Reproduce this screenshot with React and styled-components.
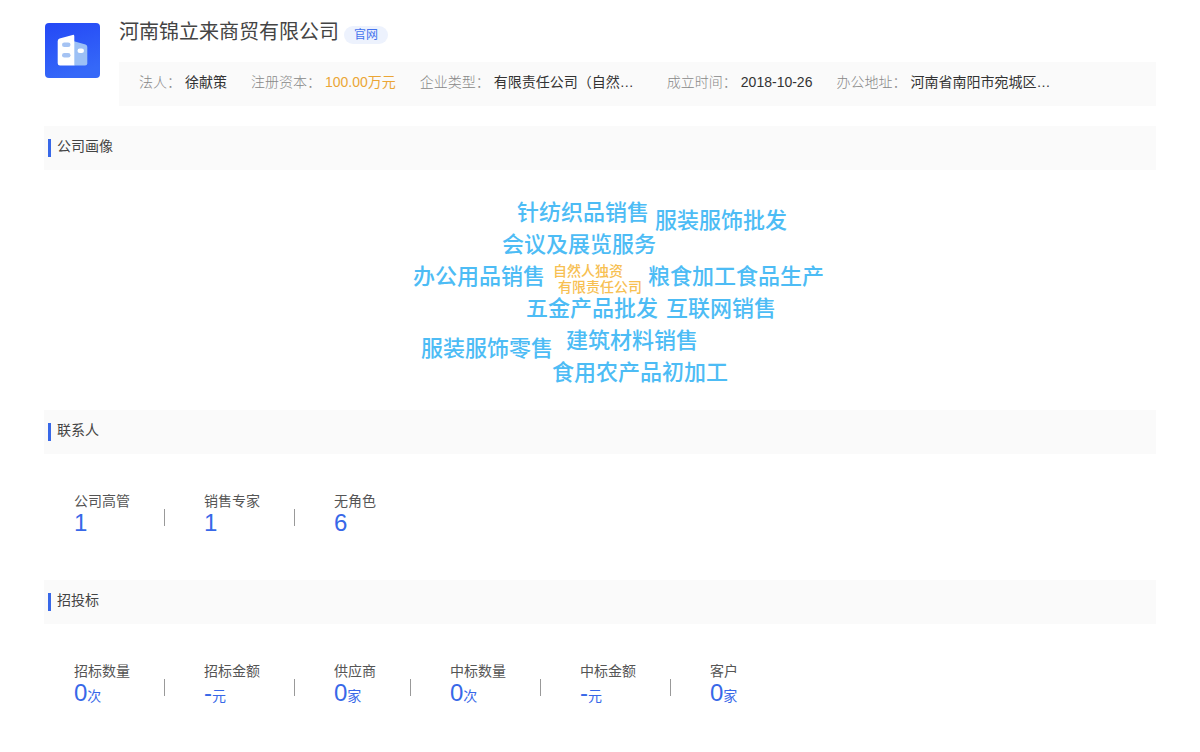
import styled, { createGlobalStyle } from "styled-components";

const infos = [
  { id: 1, label: "法人：", value: "徐献策" },
  { id: 2, label: "注册资本：", value: "100.00万元", highlight: true },
  { id: 3, label: "企业类型：", value: "有限责任公司（自然…", wide: true },
  { id: 4, label: "成立时间：", value: "2018-10-26" },
  { id: 5, label: "办公地址：", value: "河南省南阳市宛城区…", wide: true },
];

// x is measured from the middle of the cloud, y from its top
const words = [
  { text: "针纺织品销售", x: -83, y: 27 },
  { text: "服装服饰批发", x: 55, y: 35 },
  { text: "会议及展览服务", x: -98, y: 59 },
  { text: "办公用品销售", x: -187, y: 91 },
  { text: "自然人独资", x: -47, y: 90, small: true },
  { text: "有限责任公司", x: -42, y: 106, small: true },
  { text: "粮食加工食品生产", x: 48, y: 91 },
  { text: "五金产品批发", x: -74, y: 123 },
  { text: "互联网销售", x: 66, y: 123 },
  { text: "建筑材料销售", x: -34, y: 155 },
  { text: "服装服饰零售", x: -179, y: 163 },
  { text: "食用农产品初加工", x: -48, y: 187 },
];

const contacts = [
  { label: "公司高管", value: "1" },
  { label: "销售专家", value: "1" },
  { label: "无角色", value: "6" },
];

const bids = [
  { label: "招标数量", value: "0", unit: "次" },
  { label: "招标金额", value: "-", unit: "元" },
  { label: "供应商", value: "0", unit: "家" },
  { label: "中标数量", value: "0", unit: "次" },
  { label: "中标金额", value: "-", unit: "元" },
  { label: "客户", value: "0", unit: "家" },
];

const CompanyLogo = () => (
  <Logo viewBox="-1 -1 56 56" role="img" aria-label="公司">
    <defs>
      <linearGradient id="logoBg" x1="0" y1="0" x2="0.3" y2="1">
        <stop offset="0" stopColor="#2448f6" />
        <stop offset="1" stopColor="#3568f8" />
      </linearGradient>
    </defs>
    <rect width="55" height="55" rx="4" fill="url(#logoBg)" />
    <path
      d="M29 18.2l11.500 3.300q1.800.6 1.800 2.400v16.400q0 2.200-2.200 2.200H29z"
      fill="#9cc0f5"
    />
    <path
      d="M14.600 15.400L27.600 11.900q1.700-.4 1.700 1.300v29.300H15q-2.300 0-2.300-2.300V18q0-2.100 1.900-2.600z"
      fill="#fff"
    />
    <rect x="17" y="19.500" width="8.500" height="4.600" rx="2.300" fill="#a5c3f3" />
    <rect x="17" y="30" width="8.500" height="4.600" rx="2.300" fill="#a5c3f3" />
    <rect x="32.500" y="25.500" width="6.500" height="4.600" rx="2.300" fill="#fff" />
  </Logo>
);

const StatList = ({ items }) => (
  <Stats>
    {items.map((item) => (
      <Stat key={item.label}>
        <StatLabel>{item.label}</StatLabel>
        <StatValue>
          {item.value}
          {item.unit && <StatUnit>{item.unit}</StatUnit>}
        </StatValue>
      </Stat>
    ))}
  </Stats>
);

const App = () => {
  return (
    <>
      <GlobalStyle />
      <Container lang="zh-CN">
        <Header>
          <CompanyLogo />
          <HeaderMain>
            <TitleRow>
              <Title>河南锦立来商贸有限公司</Title>
              <SiteLink href="#">官网</SiteLink>
            </TitleRow>
            <InfoBar>
              {infos.map((item) => (
                <InfoItem key={item.id}>
                  <InfoLabel>{item.label}</InfoLabel>
                  <InfoValue $highlight={item.highlight} $wide={item.wide}>
                    {item.value}
                  </InfoValue>
                </InfoItem>
              ))}
            </InfoBar>
          </HeaderMain>
        </Header>
        <section>
          <SectionTitle>公司画像</SectionTitle>
          <Cloud>
            {words.map((word) => (
              <Word key={word.text} $x={word.x} $y={word.y} $small={word.small}>
                {word.text}
              </Word>
            ))}
          </Cloud>
        </section>
        <section>
          <SectionTitle>联系人</SectionTitle>
          <StatList items={contacts} />
        </section>
        <section>
          <SectionTitle>招投标</SectionTitle>
          <StatList items={bids} />
        </section>
      </Container>
    </>
  );
};

export default App;

const GlobalStyle = createGlobalStyle`
  * {
    box-sizing: border-box;
  }
  body {
    margin: 0;
    background: #fff;
    color: #444;
    font-family: "Liberation Sans", "Noto Sans CJK SC", sans-serif;
    font-size: 14px;
    line-height: 20px;
  }
`;
const Container = styled.main`
  padding: 20px 44px 0;
`;
const Header = styled.header`
  display: flex;
  gap: 19px;
  margin-bottom: 20px;
`;
const Logo = styled.svg`
  flex: none;
  width: 56px;
  height: 56px;
  margin-top: 2px;
`;
const HeaderMain = styled.div`
  flex: 1;
  min-width: 0;
`;
const TitleRow = styled.div`
  display: flex;
  align-items: flex-end;
  gap: 5px;
  height: 24px;
  margin-bottom: 18px;
`;
const Title = styled.h1`
  margin: 0;
  font-weight: 400;
  font-size: 20px;
  line-height: 24px;
`;
const SiteLink = styled.a`
  padding: 0 10px;
  border-radius: 9px;
  background: #edf2fd;
  color: #4472ee;
  font-size: 12px;
  line-height: 18px;
  text-decoration: none;
`;
const InfoBar = styled.dl`
  display: flex;
  flex-wrap: wrap;
  gap: 4px 24px;
  margin: 0;
  padding: 10px 20px 14px;
  background: #fafafa;
`;
const InfoItem = styled.div`
  display: flex;
  gap: 4px;
`;
const InfoLabel = styled.dt`
  color: #888;
  font-weight: 300;
`;
const InfoValue = styled.dd`
  width: ${(props) => (props.$wide ? "149px" : "auto")};
  margin: 0;
  color: ${(props) => (props.$highlight ? "#eba636" : "#333")};
  white-space: nowrap;
`;
const SectionTitle = styled.h2`
  display: flex;
  align-items: flex-start;
  gap: 6px;
  margin: 0;
  padding: 10px 4px 13px;
  background: #fafafa;
  font-weight: 400;
  font-size: 14px;
  line-height: 20px;
  &::before {
    content: "";
    width: 3px;
    height: 18px;
    margin-top: 3px;
    background: #3868e8;
  }
`;
const Cloud = styled.div`
  position: relative;
  height: 240px;
`;
const Word = styled.span`
  position: absolute;
  top: ${(props) => props.$y}px;
  left: calc(50% + ${(props) => props.$x}px);
  color: ${(props) => (props.$small ? "#f7c052" : "#4dbcf5")};
  font-weight: 500;
  font-size: ${(props) => (props.$small ? "14px" : "22px")};
  line-height: ${(props) => (props.$small ? "22px" : "32px")};
  white-space: nowrap;
`;
const Stats = styled.dl`
  display: flex;
  flex-wrap: wrap;
  margin: 0;
  padding: 37px 30px 45px;
`;
const Stat = styled.div`
  display: grid;
  grid-template-columns: auto 1px;
  column-gap: 34px;
  margin-right: 39px;
  &:not(:last-child)::after {
    content: "";
    grid-area: 1 / 2 / span 2;
    align-self: center;
    height: 17px;
    margin-top: 8px;
    background: #999;
  }
`;
const StatLabel = styled.dt`
  grid-column: 1;
  color: #555;
`;
const StatValue = styled.dd`
  grid-column: 1;
  margin: 0;
  color: #3868e8;
  font-size: 24px;
  line-height: 24px;
`;
const StatUnit = styled.span`
  font-size: 14px;
  line-height: 14px;
`;
